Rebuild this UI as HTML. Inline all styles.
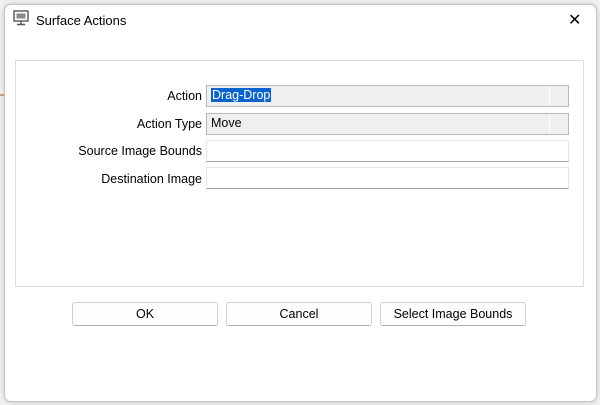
<!DOCTYPE html>
<html><head><style>
body{margin:0;width:600px;height:405px;background:#f0f0f0;position:relative;overflow:hidden;font-family:"Liberation Sans",sans-serif;font-size:12.5px;color:#000}
.dlg{position:absolute;left:4px;top:4px;width:591px;height:396px;background:#fff;border:1px solid #c8c8c8;border-radius:7px;box-shadow:0 0 4px rgba(0,0,0,.2)}
.title{position:absolute;left:36px;top:13px;font-size:13px}
.x{position:absolute;left:568px;top:10px;font-size:16px}
.panel{position:absolute;left:15px;top:60px;width:567px;height:225px;border:1px solid #dcdcdc;background:#fff}
.lbl{position:absolute;right:398px;text-align:right;white-space:nowrap}
.f{position:absolute;left:206px;width:363px;height:22px;box-sizing:border-box}
.ro{background:#efefef;border:1px solid #b8b8c0}
.ro:after{content:"";position:absolute;right:18px;top:1px;bottom:1px;border-left:1px solid #fff}
.ed{background:#fff;border:1px solid #e6e6e6;border-bottom:1px solid #a0a0a0}
.f span{position:absolute;left:4px;top:2px}
.btn{position:absolute;top:302px;height:24px;width:146px;box-sizing:border-box;border:1px solid #d0d0d0;border-bottom-color:#b0b0b0;border-radius:3px;background:#fdfdfd;text-align:center;line-height:22px}
</style></head><body>
<div style="position:absolute;left:0;top:94px;width:4px;height:2px;background:#c9a58a"></div>
<div class="dlg"></div>
<svg style="position:absolute;left:13px;top:10px" width="16" height="16" viewBox="0 0 16 16"><rect x="1" y="1" width="14" height="10" fill="#fff" stroke="#555" stroke-width="1.4"/><rect x="3.5" y="3.5" width="9" height="5" fill="#888"/><path d="M8 11v3M4 14.5h8" stroke="#555" stroke-width="1.4"/></svg>
<div class="title">Surface Actions</div>
<div class="x">✕</div>
<div class="panel"></div>
<div class="lbl" style="top:89px">Action</div>
<div class="lbl" style="top:117px">Action Type</div>
<div class="lbl" style="top:144px">Source Image Bounds</div>
<div class="lbl" style="top:172px">Destination Image</div>
<div class="f ro" style="top:85px"><span style="background:#0a64d0;color:#fff;padding:0 1px;left:4px">Drag-Drop</span></div>
<div class="f ro" style="top:113px"><span>Move</span></div>
<div class="f ed" style="top:140px"></div>
<div class="f ed" style="top:167px"></div>
<div class="btn" style="left:72px">OK</div>
<div class="btn" style="left:226px">Cancel</div>
<div class="btn" style="left:380px">Select Image Bounds</div>
</body></html>
